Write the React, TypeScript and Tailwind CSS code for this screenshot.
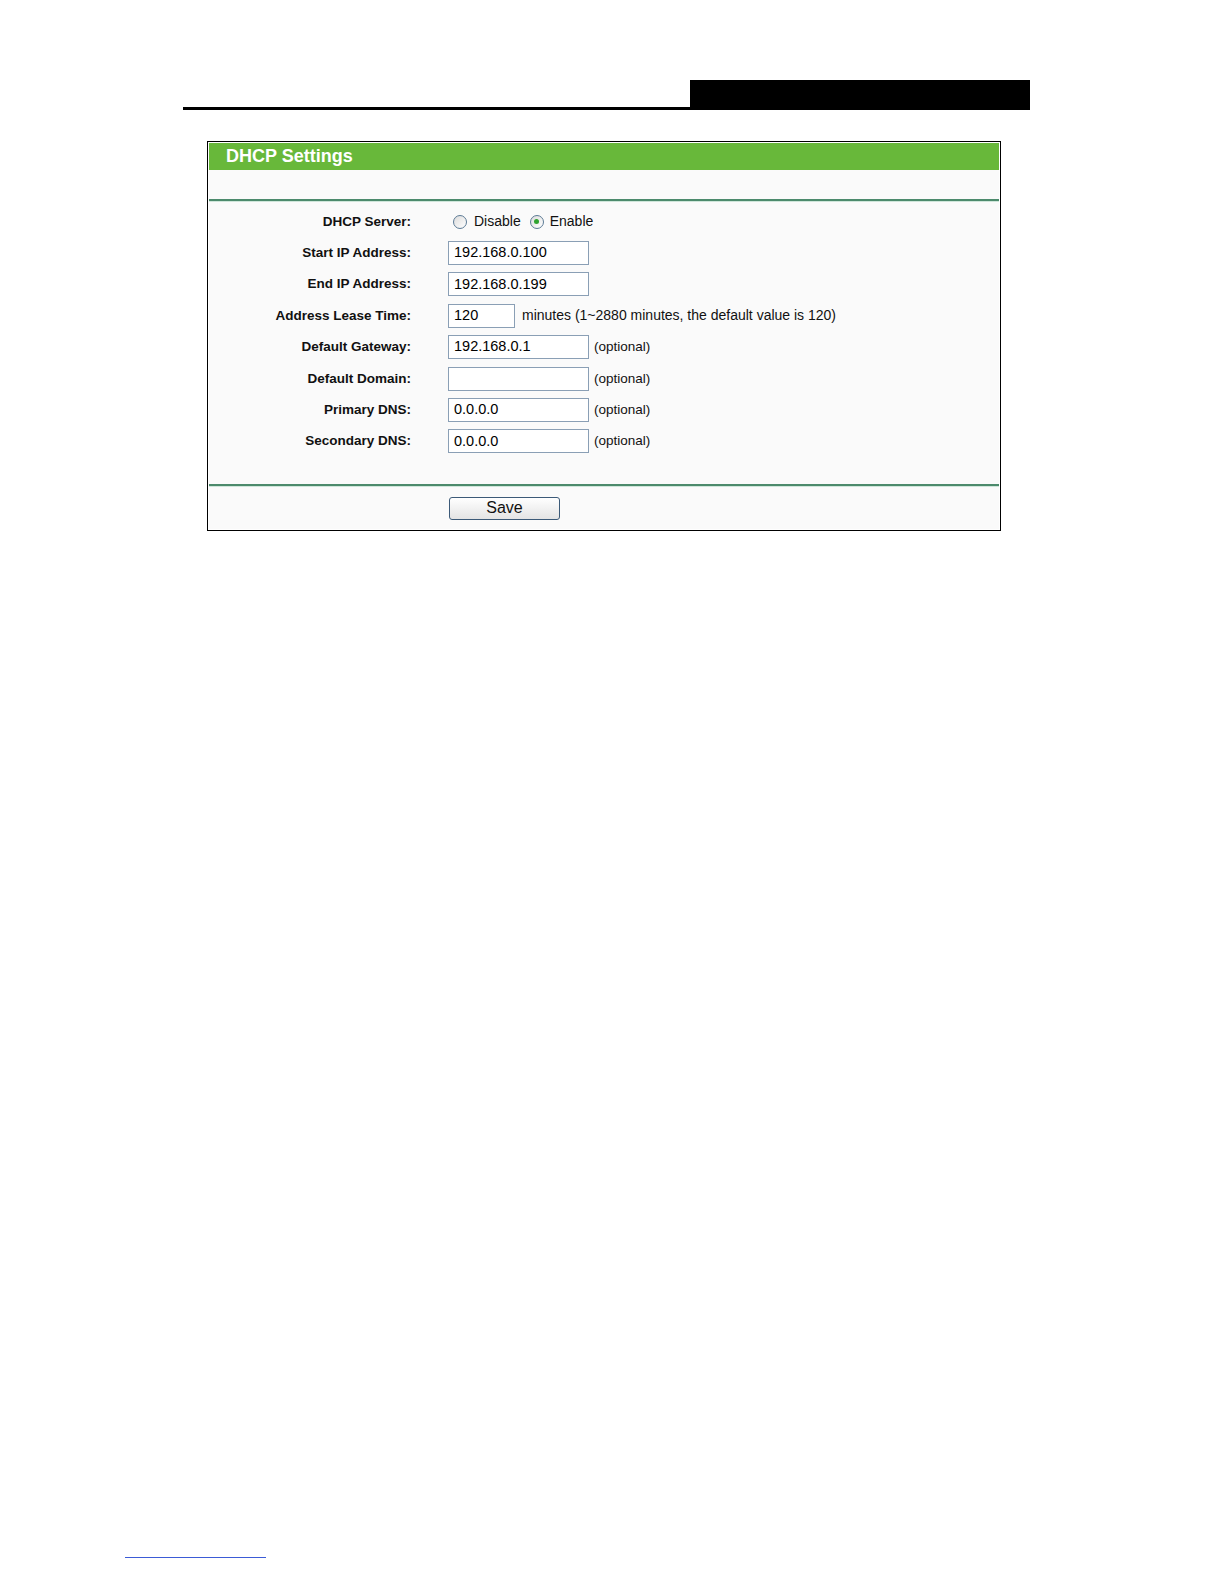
import React from 'react';

const font = { fontFamily: '"Liberation Sans", Arial, sans-serif' };

const Radio = ({ checked }: { checked?: boolean }) => (
  <span className="inline-flex h-[14px] w-[14px] shrink-0 items-center justify-center rounded-full border border-[#5c7a95] bg-gradient-to-br from-[#dcdcdc] to-white">
    {checked && <span className="h-[5px] w-[5px] rounded-full bg-[#2fa32f]" />}
  </span>
);

const TextBox = ({ value, wide = true }: { value: string; wide?: boolean }) => (
  <div
    className={`flex h-[24px] items-center border border-[#8a9fb5] bg-white pl-[5px] text-[14.5px] text-black ${
      wide ? 'w-[141px]' : 'w-[67px]'
    }`}
  >
    {value}
  </div>
);

const Optional = () => <span className="ml-[5px] text-[13.5px] text-[#111]">(optional)</span>;

const Row = ({ label, children }: { label: string; children: React.ReactNode }) => (
  <div className="flex h-[31.4px] items-center">
    <div className="w-[202px] text-right text-[13.5px] font-bold text-[#111]">{label}</div>
    <div className="ml-[37px] flex items-center">{children}</div>
  </div>
);

export default function App() {
  return (
    <div className="relative h-[1584px] w-full overflow-hidden bg-white" style={font}>
      {/* page header rule */}
      <div className="ml-[183px] flex w-[847px] items-end pt-[80px]">
        <div className="h-[3px] flex-1 bg-black" />
        <div className="h-[30px] w-[340px] bg-black" />
      </div>

      {/* DHCP panel */}
      <div className="ml-[207px] mt-[31px] w-[794px] border border-black bg-white p-px">
        <div className="bg-[#fafafa]">
          <div className="flex h-[27px] items-center bg-[#68b83a] pl-[17px] text-[18px] font-bold text-white">
            DHCP Settings
          </div>
          <div className="h-[29px]" />
          <div className="h-[2px] bg-[#4c8a6c]" />
          <div className="h-px bg-[#cfe6da]" />

          <div className="pt-[4px]">
            <Row label="DHCP Server:">
              <div className="ml-[5px] flex items-center text-[14px] text-[#111]">
                <Radio />
                <span className="ml-[7px]">Disable</span>
                <span className="ml-[9px] flex items-center">
                  <Radio checked />
                </span>
                <span className="ml-[6px]">Enable</span>
              </div>
            </Row>
            <Row label="Start IP Address:">
              <TextBox value="192.168.0.100" />
            </Row>
            <Row label="End IP Address:">
              <TextBox value="192.168.0.199" />
            </Row>
            <Row label="Address Lease Time:">
              <TextBox value="120" wide={false} />
              <span className="ml-[7px] text-[14px] text-[#111]">
                minutes (1~2880 minutes, the default value is 120)
              </span>
            </Row>
            <Row label="Default Gateway:">
              <TextBox value="192.168.0.1" />
              <Optional />
            </Row>
            <Row label="Default Domain:">
              <TextBox value="" />
              <Optional />
            </Row>
            <Row label="Primary DNS:">
              <TextBox value="0.0.0.0" />
              <Optional />
            </Row>
            <Row label="Secondary DNS:">
              <TextBox value="0.0.0.0" />
              <Optional />
            </Row>
          </div>

          <div className="h-[27px]" />
          <div className="h-[2px] bg-[#4c8a6c]" />
          <div className="h-px bg-[#cfe6da]" />

          <div className="flex h-[42px] items-center">
            <button className="ml-[240px] flex h-[23px] w-[111px] items-center justify-center rounded-[3px] border border-[#3c5a78] bg-gradient-to-b from-white to-[#e4e4e4] text-[16px] text-[#111]">
              Save
            </button>
          </div>
        </div>
      </div>

      {/* footer link underline */}
      <div className="ml-[125px] mt-[1026px] h-px w-[141px] bg-[#3b5bd6]" />
    </div>
  );
}
